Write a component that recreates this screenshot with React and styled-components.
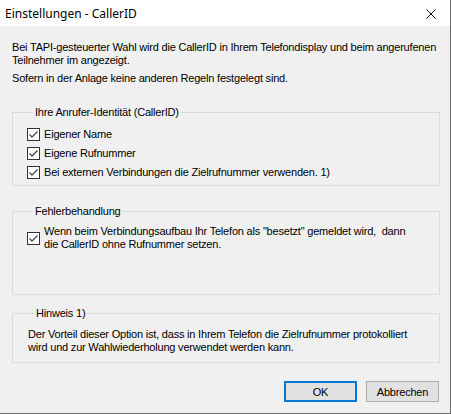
import React from "react";
import styled, { createGlobalStyle } from "styled-components";

const GlobalStyle = createGlobalStyle`
  html, body {
    margin: 0;
    padding: 0;
    background: #f0f0f0;
  }
`;

const Window = styled.div`
  width: 451px;
  height: 414px;
  box-sizing: border-box;
  background: #f0f0f0;
  border-right: 1px solid #6b6b6b;
  border-bottom: 1px solid #6b6b6b;
  display: flex;
  flex-direction: column;
  font-family: "Liberation Sans", Arial, sans-serif;
  font-size: 11px;
  letter-spacing: -0.2px;
  color: #000;
`;

const TitleBar = styled.div`
  height: 26px;
  flex-shrink: 0;
  background: #fff;
  display: flex;
  align-items: center;
  justify-content: space-between;
  padding-left: 5px;
`;

const Title = styled.span`
  font-family: "Noto Sans", "Segoe UI", sans-serif;
  font-size: 12px;
  letter-spacing: 0;
  color: #000;
`;

const CloseIcon = styled.svg`
  width: 10px;
  height: 10px;
  margin-right: 14px;
  margin-top: 1px;
`;

const Body = styled.div`
  padding: 15px 10px 0 12px;
  display: flex;
  flex-direction: column;
`;

const Para = styled.p`
  margin: 0;
  line-height: 13px;
  white-space: nowrap;
  & + & {
    margin-top: 5px;
  }
`;

const Group = styled.fieldset`
  margin: ${(p) => p.$top}px 0 0 0;
  padding: ${(p) => p.$pad};
  border: 1px solid #dcdcdc;
  min-inline-size: 0;
`;

const Legend = styled.legend`
  margin-left: 6px;
  padding: 0 2px;
  line-height: 13px;
`;

const CheckRow = styled.label`
  display: flex;
  align-items: center;
  gap: 4px;
  min-height: 18px;
  line-height: 13px;
  white-space: nowrap;
  & + & {
    margin-top: 1px;
  }
`;

const Box = styled.span`
  width: 13px;
  height: 13px;
  box-sizing: border-box;
  flex-shrink: 0;
  border: 1px solid #333;
  background: #fff;
  display: flex;
  align-items: center;
  justify-content: center;
`;

const Note = styled.p`
  margin: 0;
  line-height: 13px;
  white-space: nowrap;
`;

const Buttons = styled.div`
  margin-top: 18px;
  display: flex;
  justify-content: flex-end;
  gap: 9px;
  padding-right: 1px;
`;

const Button = styled.button`
  width: 73px;
  height: 21px;
  box-sizing: border-box;
  padding: 0;
  font-family: "Liberation Sans", Arial, sans-serif;
  font-size: 11px;
  letter-spacing: -0.2px;
  color: #000;
  background: #e1e1e1;
  border: ${(p) => (p.$default ? "2px solid #0078d7" : "1px solid #adadad")};
  border-radius: 0;
`;

function Checkbox({ children }) {
  return (
    <CheckRow>
      <Box>
        <svg width="11" height="11" viewBox="0 0 11 11">
          <path d="M1.5 5.5 L4 8 L9.5 2.5" fill="none" stroke="#4a4a4a" strokeWidth="1.3" />
        </svg>
      </Box>
      <span>{children}</span>
    </CheckRow>
  );
}

export default function App() {
  return (
    <>
      <GlobalStyle />
      <Window>
        <TitleBar>
          <Title>Einstellungen - CallerID</Title>
          <CloseIcon viewBox="0 0 10 10">
            <path d="M0.5 0.5 L9.5 9.5 M9.5 0.5 L0.5 9.5" stroke="#111" strokeWidth="1" fill="none" />
          </CloseIcon>
        </TitleBar>
        <Body>
          <Para>
            Bei TAPI-gesteuerter Wahl wird die CallerID in Ihrem Telefondisplay und beim angerufenen
            <br />
            Teilnehmer im angezeigt.
          </Para>
          <Para>Sofern in der Anlage keine anderen Regeln festgelegt sind.</Para>

          <Group $top={21} $pad="6px 0 4px 14px">
            <Legend>Ihre Anrufer-Identität (CallerID)</Legend>
            <Checkbox>Eigener Name</Checkbox>
            <Checkbox>Eigene Rufnummer</Checkbox>
            <Checkbox>Bei externen Verbindungen die Zielrufnummer verwenden. 1)</Checkbox>
          </Group>

          <Group $top={19} $pad="7px 0 43px 14px">
            <Legend>Fehlerbehandlung</Legend>
            <Checkbox>
              Wenn beim Verbindungsaufbau Ihr Telefon als "besetzt" gemeldet wird,{"\u00a0"} dann
              <br />
              die CallerID ohne Rufnummer setzen.
            </Checkbox>
          </Group>

          <Group $top={12} $pad="8px 0 8px 15px">
            <Legend>Hinweis 1)</Legend>
            <Note>
              Der Vorteil dieser Option ist, dass in Ihrem Telefon die Zielrufnummer protokolliert
              <br />
              wird und zur Wahlwiederholung verwendet werden kann.
            </Note>
          </Group>

          <Buttons>
            <Button $default>OK</Button>
            <Button>Abbrechen</Button>
          </Buttons>
        </Body>
      </Window>
    </>
  );
}
